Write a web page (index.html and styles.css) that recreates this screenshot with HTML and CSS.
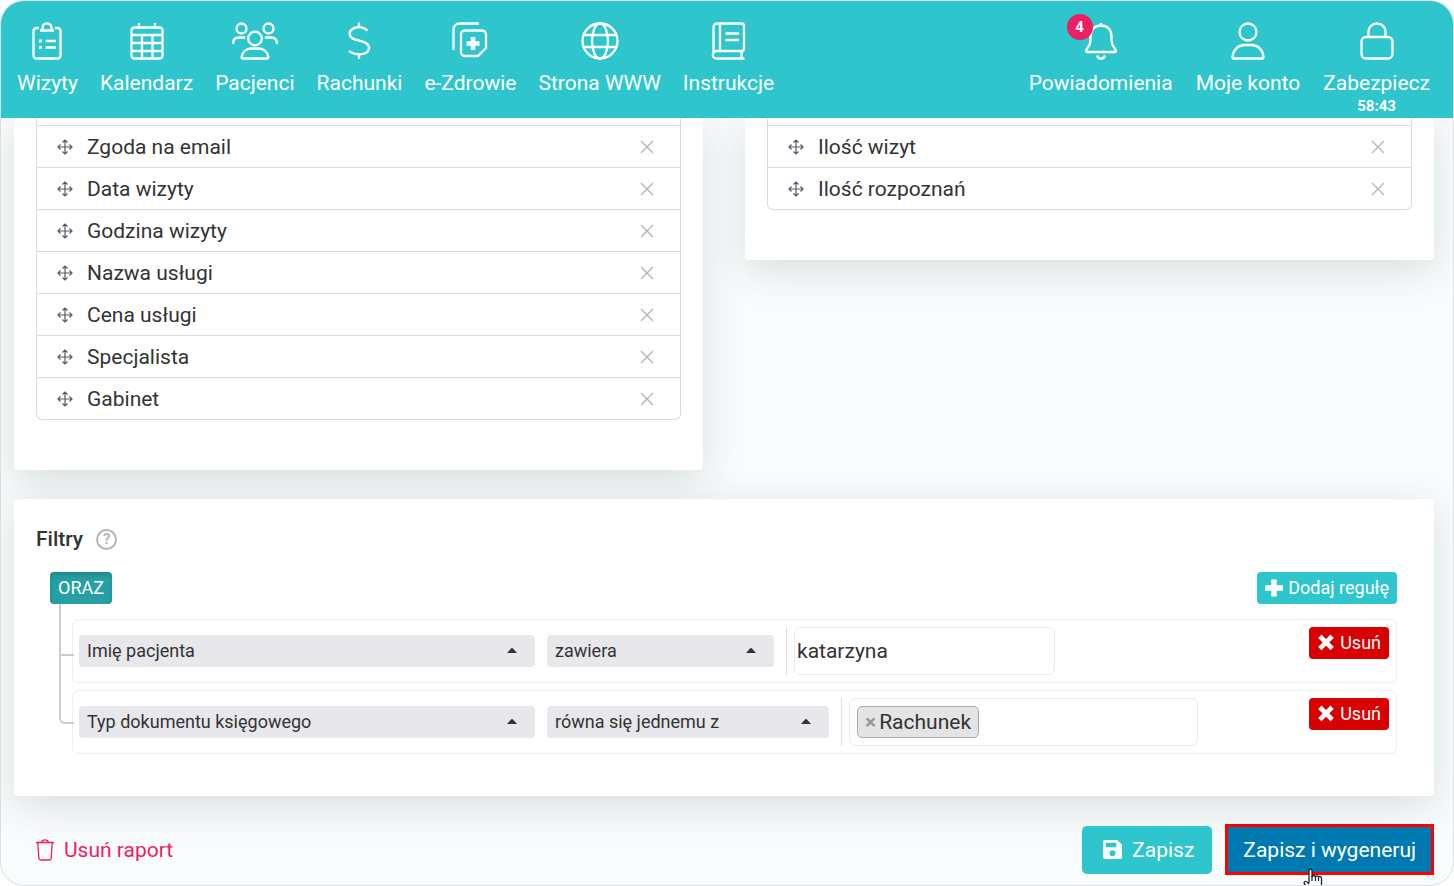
FILE: index.html
```html
<!DOCTYPE html>
<html lang="pl">
<head>
<meta charset="utf-8">
<meta name="viewport" content="width=device-width, initial-scale=1">
<title>Raport</title>
<link rel="stylesheet" href="styles.css">
</head>
<body>
<svg class="symbols" aria-hidden="true">
  <symbol id="move" viewBox="0 0 16 16"><path d="M8 1v14M1 8h14M5.500 3.500 8 1l2.500 2.500M5.500 12.500 8 15l2.500-2.500M3.500 5.500 1 8l2.500 2.500M12.500 5.500 15 8l-2.500 2.500" fill="none" stroke="currentColor" stroke-width="1.200"/></symbol>
  <symbol id="close" viewBox="0 0 14 14"><path d="M1 1l12 12M13 1 1 13" fill="none" stroke="currentColor" stroke-width="1.400"/></symbol>
  <symbol id="caret" viewBox="0 0 10 5"><path d="M0 5 4 .6Q5-.4 6 .6L10 5z" fill="currentColor"/></symbol>
  <symbol id="cross" viewBox="0 0 16 16"><path d="M4 3.500l8 8M12 3.500l-8 8" stroke="currentColor" stroke-width="4.200" stroke-linecap="square" fill="none"/></symbol>
</svg>
<div class="app">
  <header class="topbar">
    <nav class="nav nav-main">
      <a class="nav-item" href="#">
        <svg class="icon" viewBox="0 0 38 38"><path d="M11 6H8.500A3 3 0 0 0 5.500 9v24.500a3 3 0 0 0 3 3h21a3 3 0 0 0 3-3V9a3 3 0 0 0-3-3H27M12 8.500h14M14.500 8.500V5.800a4.500 4.500 0 0 1 9 0v2.700M17.500 19H28M17.500 25.500H28"/><path d="M11 19h3M11 25.500h3" stroke-width="3"/></svg>
        <span>Wizyty</span></a>
      <a class="nav-item" href="#">
        <svg class="icon" viewBox="0 0 38 38"><rect x="3.500" y="5.500" width="31" height="31" rx="3"/><path d="M3.500 13h31M3.500 21h31M3.500 29h31M14 13v23M24.500 13v23M11 1v5M27 1v5"/></svg>
        <span>Kalendarz</span></a>
      <a class="nav-item" href="#">
        <svg class="icon icon-wide" viewBox="0 0 46 38"><circle cx="23" cy="16.500" r="6.800"/><path d="M10.500 36.500c-.6 0-1-.5-.9-1.200.5-5 4.400-8.800 9.400-8.800h8c5 0 8.900 3.800 9.400 8.800.1.700-.3 1.200-.9 1.200z"/><circle cx="9.500" cy="6.500" r="5"/><circle cx="36.500" cy="6.500" r="5"/><path d="M1.200 22v-1c0-3.500 2.500-5.500 6-5.500h6M44.800 22v-1c0-3.500-2.500-5.500-6-5.500h-6"/></svg>
        <span>Pacjenci</span></a>
      <a class="nav-item" href="#">
        <svg class="icon" viewBox="0 0 38 38"><path d="M19 .5v4.500M19 32.500V37M27.500 8.500C24.500 6 22 5.200 19 5.200c-5.500 0-9.300 2.600-9.300 6.600 0 8.900 19.300 4.900 19.300 13.900 0 4.200-4 6.600-9.500 6.600-4 0-7.500-1-10.500-3.500"/></svg>
        <span>Rachunki</span></a>
      <a class="nav-item" href="#">
        <svg class="icon" viewBox="0 0 38 38"><path d="M2.500 28V7.500a6 6 0 0 1 6-6H28M14 8.500h17a4 4 0 0 1 4 4v13.500l-8 8H14a4 4 0 0 1-4-4v-17.500a4 4 0 0 1 4-4z"/><path d="M22 15v13M15.500 21.500h13" stroke-width="4.500"/></svg>
        <span>e-Zdrowie</span></a>
      <a class="nav-item" href="#">
        <svg class="icon" viewBox="0 0 38 38"><circle cx="19" cy="19" r="17.500"/><ellipse cx="19" cy="19" rx="8" ry="17.500"/><path d="M3 13h32M3 25h32"/></svg>
        <span>Strona WWW</span></a>
      <a class="nav-item" href="#">
        <svg class="icon" viewBox="0 0 38 38"><path d="M33.500 29H6.500a3.500 3.500 0 0 0 0 7.500h28M3.500 32V5a3.500 3.500 0 0 1 3.500-3.500h24.500a2.500 2.500 0 0 1 2.500 2.500v22.500a2.500 2.500 0 0 1-2.500 2.500M10 1.500V29M31.500 29v7.500M15.500 11.500h13.500M15.500 18h13.500"/></svg>
        <span>Instrukcje</span></a>
    </nav>
    <nav class="nav">
      <a class="nav-item" href="#">
        <svg class="icon" viewBox="0 0 38 38"><path d="M19 1v2.500M19 3.500c-6.500 0-10.500 4.500-10.500 11v4c0 3-1 5-3 7.500-1.500 2-2 4-.5 4h28c1.500 0 1-2-.5-4-2-2.500-3-4.500-3-7.500v-4c0-6.500-4-11-10.500-11zM15 33.500c1 2.700 2.300 3.200 4 3.200s3-.5 4-3.200"/></svg>
        <span class="badge">4</span>
        <span>Powiadomienia</span></a>
      <a class="nav-item" href="#">
        <svg class="icon" viewBox="0 0 38 38"><circle cx="19" cy="10" r="8.500"/><path d="M5 36.500c-1 0-1.600-.6-1.500-1.500.6-7 5.500-12 12-12h7c6.500 0 11.400 5 12 12 .1.900-.5 1.500-1.500 1.500z"/></svg>
        <span>Moje konto</span></a>
      <a class="nav-item" href="#">
        <svg class="icon" viewBox="0 0 38 38"><rect x="3.500" y="15" width="31" height="21.500" rx="4.500"/><path d="M10.500 15V9.500a8.500 8 0 0 1 17 0V15"/></svg>
        <span>Zabezpiecz</span>
        <span class="timer">58:43</span></a>
    </nav>
  </header>

  <main class="page">
    <div class="columns">
      <section class="card">
        <ul class="list">
          <li><svg class="move"><use href="#move"/></svg>Zgoda na email<button class="remove" aria-label="Usuń"><svg><use href="#close"/></svg></button></li>
          <li><svg class="move"><use href="#move"/></svg>Data wizyty<button class="remove" aria-label="Usuń"><svg><use href="#close"/></svg></button></li>
          <li><svg class="move"><use href="#move"/></svg>Godzina wizyty<button class="remove" aria-label="Usuń"><svg><use href="#close"/></svg></button></li>
          <li><svg class="move"><use href="#move"/></svg>Nazwa usługi<button class="remove" aria-label="Usuń"><svg><use href="#close"/></svg></button></li>
          <li><svg class="move"><use href="#move"/></svg>Cena usługi<button class="remove" aria-label="Usuń"><svg><use href="#close"/></svg></button></li>
          <li><svg class="move"><use href="#move"/></svg>Specjalista<button class="remove" aria-label="Usuń"><svg><use href="#close"/></svg></button></li>
          <li><svg class="move"><use href="#move"/></svg>Gabinet<button class="remove" aria-label="Usuń"><svg><use href="#close"/></svg></button></li>
        </ul>
      </section>
      <section class="card">
        <ul class="list">
          <li><svg class="move"><use href="#move"/></svg>Ilość wizyt<button class="remove" aria-label="Usuń"><svg><use href="#close"/></svg></button></li>
          <li><svg class="move"><use href="#move"/></svg>Ilość rozpoznań<button class="remove" aria-label="Usuń"><svg><use href="#close"/></svg></button></li>
        </ul>
      </section>
    </div>

    <section class="card filters">
      <h2 class="title">Filtry
        <button class="help" aria-label="Pomoc">?</button>
      </h2>
      <div class="group">
        <div class="group-head">
          <button class="btn-small btn-and">ORAZ</button>
          <button class="btn-small btn-add"><svg viewBox="0 0 18 18"><path d="M9 .5v17M0 9h18" stroke="currentColor" stroke-width="5.500"/></svg>Dodaj regułę</button>
        </div>
        <div class="rules">
          <div class="rule">
            <div class="select field"><select aria-label="Pole"><option>Imię pacjenta</option></select><svg><use href="#caret"/></svg></div>
            <div class="select operator"><select aria-label="Operator"><option>zawiera</option></select><svg><use href="#caret"/></svg></div>
            <div class="value"><input class="text" type="text" value="katarzyna" aria-label="Wartość"></div>
            <button class="btn-small btn-delete"><svg viewBox="0 0 16 16"><use href="#cross"/></svg>Usuń</button>
          </div>
          <div class="rule">
            <div class="select field"><select aria-label="Pole"><option>Typ dokumentu księgowego</option></select><svg><use href="#caret"/></svg></div>
            <div class="select operator operator-long"><select aria-label="Operator"><option>równa się jednemu z</option></select><svg><use href="#caret"/></svg></div>
            <div class="value"><div class="tags"><span class="tag"><button aria-label="Usuń Rachunek">×</button>Rachunek</span></div></div>
            <button class="btn-small btn-delete"><svg viewBox="0 0 16 16"><use href="#cross"/></svg>Usuń</button>
          </div>
        </div>
      </div>
    </section>

    <footer class="actions">
      <button class="link-danger"><svg viewBox="0 0 18 22"><path d="M0 3.500h18M5.500 3.500C6 1.500 7 .8 9 .8s3 .7 3.500 2.700M1.800 3.500l1 15.500q.2 2 2 2h8.400q1.800 0 2-2l1-15.500" fill="none" stroke="currentColor" stroke-width="1.300"/></svg>Usuń raport</button>
      <div class="buttons">
        <button class="btn"><svg viewBox="0 0 18 18"><path fill="currentColor" fill-rule="evenodd" d="M2 0h11.500L18 4.500V16a2 2 0 0 1-2 2H2a2 2 0 0 1-2-2V2a2 2 0 0 1 2-2zM2.600 2.600v4.200h10V2.600zM9 9.800a2.800 2.800 0 1 0 0 5.600 2.800 2.800 0 0 0 0-5.600z"/></svg>Zapisz</button>
        <div class="primary-wrap">
          <button class="btn btn-primary">Zapisz i wygeneruj</button>
          <svg class="pointer" viewBox="0 0 20 24"><path d="M6 15V3q0-2 1.500-2T9 3v6q0-1.500 1.500-1.500T12.500 9q0-1.200 1.500-1.200T15.500 9.500q0-1 1.500-1t1.500 2V17l-2 6H7L1.500 16q-1-2 .5-2.500T6 16" fill="#fff" stroke="#1c2033" stroke-width="1.300"/><path d="M9 8v5M12.500 9v4M15.500 9.500V13" stroke="#1c2033" stroke-width="1.200"/></svg>
        </div>
      </div>
    </footer>
  </main>
</div>
</body>
</html>
```
FILE: styles.css
```css
* { box-sizing: border-box; }
body { margin: 0; background: #fff; color: #333; font: 21px/24px Roboto, sans-serif; }
button, input, select { font: inherit; color: inherit; margin: 0; padding: 0; border: 0; background: none; }
button { cursor: pointer; }
svg { flex: none; }
.symbols { display: none; }

.app { min-height: 100vh; border: 1px solid #dcdfe1; border-radius: 24px; overflow: hidden; background: #f8fcfd; display: flex; flex-direction: column; }

.topbar { position: relative; z-index: 1; display: flex; justify-content: space-between; height: 117px; padding: 21px 23px 0 16px; background: #2fc5cd; }
.nav { display: flex; align-items: flex-start; gap: 23px; }
.nav-main { gap: 22px; }
.nav-item { position: relative; display: flex; flex-direction: column; align-items: center; color: #fff; text-decoration: none; white-space: nowrap; }
.icon { width: 38px; height: 38px; margin-bottom: 11px; fill: none; stroke: #fff; stroke-width: 2.3; stroke-linejoin: round; }
.icon-wide { width: 46px; }
.timer { font-size: 15px; line-height: 22px; font-weight: 700; }
.badge { position: absolute; top: -8px; right: calc(50% + 8px); width: 26px; height: 26px; border-radius: 50%; background: #ed1e63; font-size: 15px; line-height: 26px; font-weight: 700; text-align: center; }

.page { flex: 1; display: flex; flex-direction: column; padding: 0 19px 0 13px; }
.columns { display: grid; grid-template-columns: 1fr 1fr; gap: 42px; align-items: start; }
.card { background: #fff; border-radius: 4px; padding: 0 22px 50px; box-shadow: 0 10px 40px rgba(40, 50, 50, 0.15); }
.list { list-style: none; margin: 0; padding: 7px 0 0; border: 1px solid #dcdcdf; border-top: 0; border-radius: 0 0 6px 6px; }
.list li { display: flex; align-items: center; height: 42px; padding: 0 26px 0 20px; border-top: 1px solid #dcdcdf; }
.move { width: 16px; height: 16px; margin-right: 14px; color: #555b66; }
.remove { display: flex; margin-left: auto; color: #b5b5b5; }
.remove svg { width: 14px; height: 14px; }

.filters { margin-top: 29px; padding: 28px 37px 42px 36px; }
.title { display: flex; align-items: center; gap: 13px; margin: 0 0 21px -14px; font-size: 21px; line-height: 24px; font-weight: 500; }
.help { width: 21px; height: 21px; border: 2px solid #b5b5b8; border-radius: 50%; color: #b5b5b8; font-size: 15px; line-height: 17px; font-weight: 700; }
.group-head { display: flex; justify-content: space-between; margin-bottom: 15px; }
.btn-small { display: flex; align-items: center; height: 32px; padding: 0 8px; border-radius: 4px; color: #fff; font-size: 18px; white-space: nowrap; }
.btn-small svg { width: 18px; height: 18px; margin-right: 5px; }
.btn-and { background: #269fa5; box-shadow: inset 0 3px 5px rgba(0, 0, 0, 0.15); }
.btn-add { background: #2fc5cd; }
.btn-delete { background: #d90000; margin-left: auto; align-self: flex-start; }

.rules { display: flex; flex-direction: column; gap: 7px; padding-left: 22px; }
.rule { position: relative; display: flex; align-items: center; height: 64px; padding: 7px 7px 7px 6px; border: 1px solid #efefef; border-radius: 6px; }
.rule::before { content: ""; position: absolute; left: -14px; top: -16px; width: 13px; height: 50px; border: solid #ccc; border-width: 0 0 2px 2px; }
.rule:last-child::before { top: -38px; height: 69px; border-radius: 0 0 0 6px; }
.select { position: relative; margin-right: 12px; }
.select select { appearance: none; display: block; width: 100%; height: 32px; padding: 0 32px 0 8px; border-radius: 4px; background: #e8e7eb; font-size: 18px; }
.select svg { position: absolute; right: 18px; top: 13px; width: 10px; height: 5px; pointer-events: none; }
.field { flex: 0 1 456px; }
.operator { flex: 0 1 227px; }
.operator-long { flex-basis: 282px; }
.value { padding-left: 7px; border-left: 1px solid #ddd; }
.text { display: block; width: 261px; height: 48px; padding: 0 2px; border: 1px solid #e9edf1; border-radius: 6px; }
.tags { display: flex; align-items: center; width: 349px; height: 48px; padding: 0 7px; border: 1px solid #e9edf1; border-radius: 6px; }
.tag { display: flex; align-items: center; gap: 3px; height: 32px; padding: 0 7px; border: 1px solid #aaa; border-radius: 5px; background: #e4e4e4; }
.tag button { color: #999; font-weight: 700; }

.actions { display: flex; align-items: center; justify-content: space-between; padding: 28px 0 10px 22px; }
.link-danger { display: flex; align-items: center; gap: 10px; color: #ed1e63; }
.link-danger svg { width: 18px; height: 22px; }
.buttons { display: flex; align-items: center; gap: 13px; }
.btn { display: flex; align-items: center; gap: 10px; height: 48px; padding: 0 18px 0 21px; border-radius: 5px; background: #2fc5cd; color: #fff; white-space: nowrap; }
.btn svg { width: 19px; height: 19px; }
.primary-wrap { position: relative; }
.btn-primary { height: 51px; padding: 0 15px; border: 3px solid #f00; border-radius: 0; background: #0079b0; }
.pointer { position: absolute; left: 78px; top: 44px; width: 20px; height: 24px; }
```
